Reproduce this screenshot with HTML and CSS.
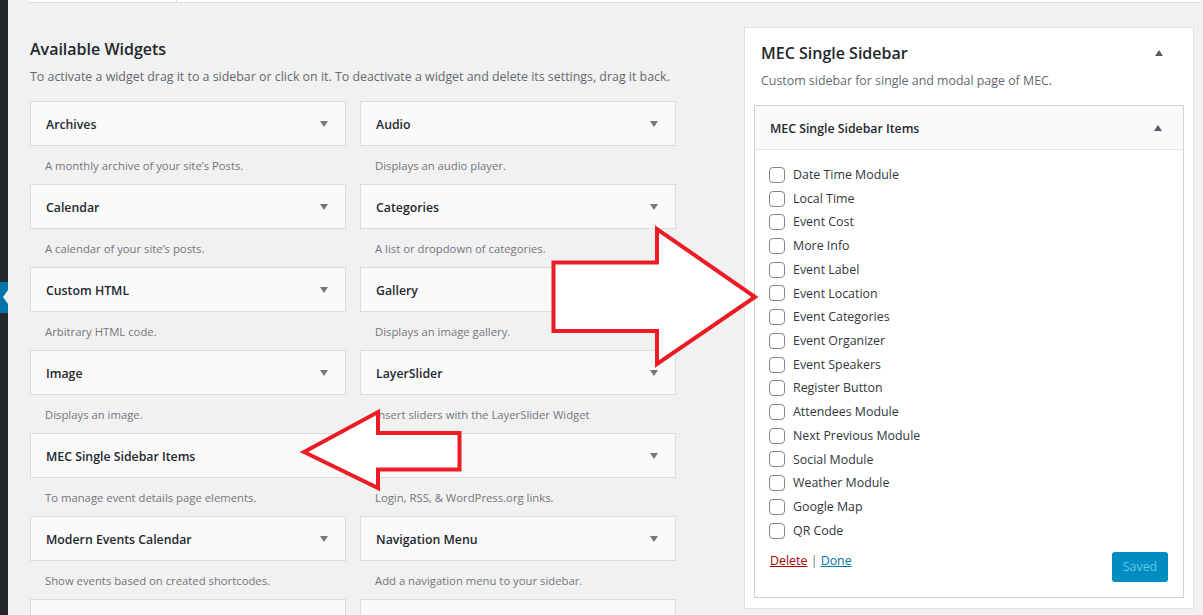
FILE: index.html
```html
<!DOCTYPE html>
<html lang="en">
<head>
    <meta charset="UTF-8">
    <title>Widgets</title>
    <link rel="stylesheet" href="styles.css">
</head>
<body>

    <div class="admin-menu">
        <div class="menu-current"></div>
    </div>

    <div class="page">
        <div class="top-tabs">
            <div class="top-tab first"></div>
            <div class="top-tab"></div>
        </div>

        <div class="columns">
            <!-- Available widgets -->
            <div class="widgets-left">
                <h2>Available Widgets</h2>
                <p class="intro">To activate a widget drag it to a sidebar or click on it. To deactivate a widget and delete its settings, drag it back.</p>

                <div class="widget-grid">
                    <div class="widget">
                        <div class="widget-top"><span class="widget-title">Archives</span><span class="caret"></span></div>
                        <div class="widget-desc">A monthly archive of your site’s Posts.</div>
                    </div>
                    <div class="widget">
                        <div class="widget-top"><span class="widget-title">Audio</span><span class="caret"></span></div>
                        <div class="widget-desc">Displays an audio player.</div>
                    </div>
                    <div class="widget">
                        <div class="widget-top"><span class="widget-title">Calendar</span><span class="caret"></span></div>
                        <div class="widget-desc">A calendar of your site’s posts.</div>
                    </div>
                    <div class="widget">
                        <div class="widget-top"><span class="widget-title">Categories</span><span class="caret"></span></div>
                        <div class="widget-desc">A list or dropdown of categories.</div>
                    </div>
                    <div class="widget">
                        <div class="widget-top"><span class="widget-title">Custom HTML</span><span class="caret"></span></div>
                        <div class="widget-desc">Arbitrary HTML code.</div>
                    </div>
                    <div class="widget">
                        <div class="widget-top"><span class="widget-title">Gallery</span><span class="caret"></span></div>
                        <div class="widget-desc">Displays an image gallery.</div>
                    </div>
                    <div class="widget">
                        <div class="widget-top"><span class="widget-title">Image</span><span class="caret"></span></div>
                        <div class="widget-desc">Displays an image.</div>
                    </div>
                    <div class="widget">
                        <div class="widget-top"><span class="widget-title">LayerSlider</span><span class="caret"></span></div>
                        <div class="widget-desc">Insert sliders with the LayerSlider Widget</div>
                    </div>
                    <div class="widget">
                        <div class="widget-top"><span class="widget-title">MEC Single Sidebar Items</span><span class="caret"></span></div>
                        <div class="widget-desc">To manage event details page elements.</div>
                    </div>
                    <div class="widget">
                        <div class="widget-top"><span class="widget-title">Meta</span><span class="caret"></span></div>
                        <div class="widget-desc">Login, RSS, &amp; WordPress.org links.</div>
                    </div>
                    <div class="widget">
                        <div class="widget-top"><span class="widget-title">Modern Events Calendar</span><span class="caret"></span></div>
                        <div class="widget-desc">Show events based on created shortcodes.</div>
                    </div>
                    <div class="widget">
                        <div class="widget-top"><span class="widget-title">Navigation Menu</span><span class="caret"></span></div>
                        <div class="widget-desc">Add a navigation menu to your sidebar.</div>
                    </div>
                    <!-- next row starts just above the fold -->
                    <div class="widget">
                        <div class="widget-top"></div>
                    </div>
                    <div class="widget">
                        <div class="widget-top"></div>
                    </div>
                </div>
            </div>

            <!-- Sidebar holder -->
            <div class="widgets-right">
                <div class="sidebar-box">
                    <div class="sidebar-name">
                        <h2>MEC Single Sidebar</h2>
                        <span class="caret up"></span>
                    </div>
                    <p class="sidebar-desc">Custom sidebar for single and modal page of MEC.</p>

                    <div class="open-widget">
                        <div class="open-widget-top">
                            <span class="widget-title">MEC Single Sidebar Items</span>
                            <span class="caret up"></span>
                        </div>
                        <div class="open-widget-body">
                            <ul class="module-list">
                                <li><label><input type="checkbox"> Date Time Module</label></li>
                                <li><label><input type="checkbox"> Local Time</label></li>
                                <li><label><input type="checkbox"> Event Cost</label></li>
                                <li><label><input type="checkbox"> More Info</label></li>
                                <li><label><input type="checkbox"> Event Label</label></li>
                                <li><label><input type="checkbox"> Event Location</label></li>
                                <li><label><input type="checkbox"> Event Categories</label></li>
                                <li><label><input type="checkbox"> Event Organizer</label></li>
                                <li><label><input type="checkbox"> Event Speakers</label></li>
                                <li><label><input type="checkbox"> Register Button</label></li>
                                <li><label><input type="checkbox"> Attendees Module</label></li>
                                <li><label><input type="checkbox"> Next Previous Module</label></li>
                                <li><label><input type="checkbox"> Social Module</label></li>
                                <li><label><input type="checkbox"> Weather Module</label></li>
                                <li><label><input type="checkbox"> Google Map</label></li>
                                <li><label><input type="checkbox"> QR Code</label></li>
                            </ul>
                            <div class="widget-actions">
                                <div class="action-links">
                                    <a href="#" class="link-delete">Delete</a> | <a href="#" class="link-done">Done</a>
                                </div>
                                <button type="button" class="btn-saved" disabled>Saved</button>
                            </div>
                        </div>
                    </div>
                </div>
            </div>
        </div>
    </div>

    <!-- Hand-drawn callout arrows -->
    <svg class="callouts" width="1203" height="615" viewBox="0 0 1203 615">
        <path d="M553.5 262.5 H657 V229 L755 297 L657 364 V331 H553.5 Z" fill="#fff" stroke="#ed1c24" stroke-width="4"/>
        <path d="M304 452 L378 412 V433 H459.5 V469.5 H378 V488 Z" fill="#fff" stroke="#ed1c24" stroke-width="4"/>
    </svg>

</body>
</html>
```

FILE: styles.css
```css
html {
    overflow: hidden;
}

body {
    margin: 0;
    font-family: "Open Sans", "Noto Sans", sans-serif;
    font-size: 12.4px;
    color: #444;
    background: #f1f1f1;
    display: flex;
    height: 100vh;
}

.admin-menu {
    width: 8px;
    flex-shrink: 0;
    background: #23282d;
    position: relative;
}

.menu-current {
    margin-top: 282px;
    height: 31px;
    background: #0073aa;
    position: relative;
}

.menu-current::after {
    content: "";
    position: absolute;
    left: 0;
    top: 8px;
    border-top: 7px solid transparent;
    border-bottom: 7px solid transparent;
    border-left: 5px solid #f1f1f1;
    transform: scaleX(-1);
    transform-origin: 4px 0;
}

.page {
    flex: 1;
    padding-left: 22px;
}

.top-tabs {
    display: flex;
    gap: 1px;
    height: 3px;
    background: #ddd;
    width: 1170px;
}

.top-tab {
    flex: 1;
    height: 2px;
    background: #fff;
}

.top-tab.first {
    flex: 0 0 146px;
}

.columns {
    display: flex;
    align-items: flex-start;
}

/* left: widget library */
.widgets-left {
    width: 646px;
    padding-top: 34px;
}

.widgets-left h2,
.sidebar-name h2 {
    margin: 0;
    font-size: 16px;
    line-height: 24px;
    font-weight: 600;
    color: #23282d;
}

.intro {
    margin: 7px 0 15px;
    line-height: 18px;
    color: #646970;
    white-space: nowrap;
}

.widget-grid {
    display: grid;
    grid-template-columns: 316px 316px;
    column-gap: 14px;
}

.widget-top {
    border: 1px solid #dcdcdc;
    background: #fafafa;
    display: flex;
    align-items: center;
    justify-content: space-between;
    padding: 1px 17px 0 15px;
    box-sizing: border-box;
    height: 45px;
}

.widget-title {
    font-weight: 600;
    font-size: 12.3px;
    color: #23282d;
}

.widget-desc {
    height: 27px;
    padding: 11px 15px 0;
    line-height: 18px;
    font-size: 11.3px;
    color: #72777c;
}

.caret {
    width: 0;
    height: 0;
    border-left: 4.5px solid transparent;
    border-right: 4.5px solid transparent;
    border-top: 6px solid #72777c;
}

.caret.up {
    border-top: none;
    border-bottom: 6px solid #555d66;
}

/* right: sidebar holder */
.widgets-right {
    margin-left: 68px;
    margin-top: 24px;
    width: 450px;
}

.sidebar-box {
    background: #fff;
    border: 1px solid #e0e0e0;
    padding: 0 9px 10px;
}

.sidebar-name {
    display: flex;
    justify-content: space-between;
    align-items: center;
    padding: 13px 21px 0 7px;
}

.sidebar-desc {
    margin: 7px 0 15px 7px;
    line-height: 18px;
    color: #646970;
}

.open-widget {
    border: 1px solid #d0d3d6;
}

.open-widget-top {
    display: flex;
    align-items: center;
    justify-content: space-between;
    padding: 1px 21px 0 15px;
    box-sizing: border-box;
    height: 44px;
    background: #fafafa;
    border-bottom: 1px solid #e2e4e7;
}

.open-widget-body {
    padding: 13px 15px 15px 14px;
}

.module-list {
    list-style: none;
    margin: 0;
    padding: 0;
}

.module-list li {
    height: 23.73px;
}

.module-list label {
    display: flex;
    align-items: center;
    gap: 8px;
    color: #32373c;
    line-height: 23.73px;
}

.module-list input {
    appearance: none;
    margin: 0;
    width: 16px;
    height: 16px;
    border: 1px solid #7e8993;
    border-radius: 4px;
    background: #fff;
}

.widget-actions {
    display: flex;
    justify-content: space-between;
    align-items: flex-start;
    margin-top: 9px;
}

.action-links {
    color: #72777c;
    line-height: 18px;
    padding-left: 1px;
}

.link-delete {
    color: #a00;
}

.link-done {
    color: #0073aa;
}

.btn-saved {
    width: 56px;
    height: 30px;
    border: none;
    border-radius: 3px;
    background: #008ec2;
    color: #66c6e4;
    font-family: inherit;
    font-size: 12.4px;
}

.callouts {
    position: absolute;
    left: 0;
    top: 0;
    pointer-events: none;
}
```
